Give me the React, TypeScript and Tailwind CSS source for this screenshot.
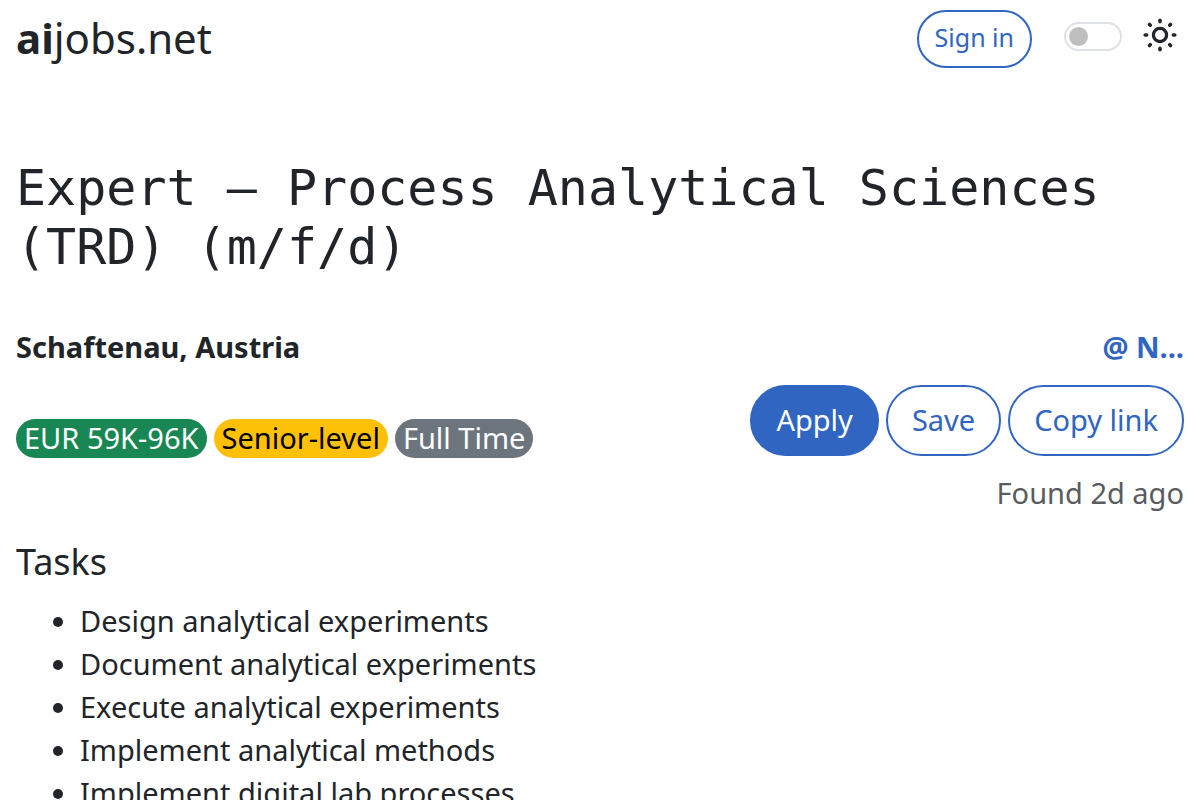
import React, { useState } from "react";

const tasks = [
  "Design analytical experiments",
  "Document analytical experiments",
  "Execute analytical experiments",
  "Implement analytical methods",
  "Implement digital lab processes",
];

const SunIcon = () => (
  <svg width="34" height="34" viewBox="0 0 34 34" fill="none" stroke="currentColor" strokeWidth="3.6" strokeLinecap="round" aria-hidden="true">
    <circle cx="17" cy="17" r="6.6" strokeWidth="3.3" />
    <path d="M17 2.2v1.4M17 30.4v1.4M2.2 17h1.4M30.4 17h1.4M6.5 6.5l.8.8M26.7 26.7l.8.8M27.5 6.5l-.8.8M7.3 26.7l-.8.8" />
  </svg>
);

const Header = () => {
  const [dark, setDark] = useState(false);

  return (
    <header className="flex items-start justify-between">
      <a href="#" className="mt-2 text-[42px] leading-[60px]">
        <b>ai</b>jobs.net
      </a>
      <div className="flex items-start pt-[10px]">
        <button
          type="button"
          className="h-[58px] rounded-full border-2 border-[#3065c1] px-4 pb-1 text-[25px] leading-[38px] text-[#3065c1]"
        >
          Sign in
        </button>
        <label className="ml-8 mr-[7px] mt-2 flex gap-[21px]">
          <input
            type="checkbox"
            checked={dark}
            onChange={(e) => setDark(e.target.checked)}
            aria-label="Dark mode"
            className="mt-1 h-[29px] w-[58px] appearance-none rounded-full border-2 border-[#dee2e6] before:m-[3px] before:block before:size-[19px] before:rounded-full before:bg-[#bfbfbf]"
          />
          <SunIcon />
        </label>
      </div>
    </header>
  );
};

const App = () => {
  return (
    <div className="px-4 font-['Noto_Sans',sans-serif] text-[29px] leading-[43px] text-[#212529]">
      <Header />
      <main>
        <h1 className="mt-[91px] font-['DejaVu_Sans_Mono',monospace] text-[50px] leading-[59px]">
          Expert – Process Analytical Sciences (TRD) (m/f/d)
        </h1>
        <div className="mt-12 flex justify-between font-bold">
          <h2>Schaftenau, Austria</h2>
          <a href="#" className="text-[#3065c1]">
            @ N...
          </a>
        </div>
        <div className="mt-[17px] flex justify-between">
          <div className="flex gap-[7px] pt-[34px] leading-[37px]">
            <span className="h-[39px] rounded-full bg-[#198754] px-2 text-white">EUR 59K-96K</span>
            <span className="h-[39px] rounded-full bg-[#ffc107] px-2 text-black">Senior-level</span>
            <span className="h-[39px] rounded-full bg-[#6c757d] px-2 text-white">Full Time</span>
          </div>
          <div>
            <div className="flex gap-[7px] text-[#3065c1]">
              <button
                type="button"
                className="h-[71px] rounded-full border-2 border-[#3065c1] bg-[#3065c1] px-6 pb-[2px] text-white"
              >
                Apply
              </button>
              <button type="button" className="h-[71px] rounded-full border-2 border-[#3065c1] px-6 pb-[2px]">
                Save
              </button>
              <button type="button" className="h-[71px] rounded-full border-2 border-[#3065c1] px-6 pb-[2px]">
                Copy link
              </button>
            </div>
            <p className="mt-[15px] text-right text-[#595c5f]">Found 2d ago</p>
          </div>
        </div>
        <h2 className="mt-[26px] text-[36px] leading-[43px]">Tasks</h2>
        <ul className="mt-4 list-disc pl-16">
          {tasks.map((task) => (
            <li key={task}>{task}</li>
          ))}
        </ul>
      </main>
    </div>
  );
};

export default App;
